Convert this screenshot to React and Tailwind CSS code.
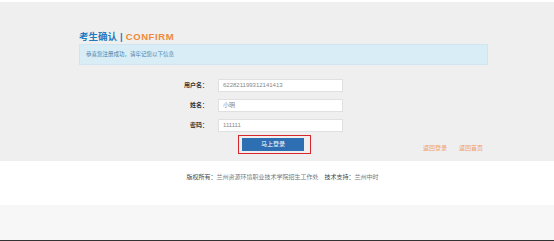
const FONT = { fontFamily: '"Liberation Sans", "Noto Sans CJK SC", sans-serif' };

const FIELDS = [
  { label: "用户名：", value: "622821199312141413" },
  { label: "姓名：", value: "小明" },
  { label: "密码：", value: "111111" },
];

export default function App() {
  return (
    <div className="w-[554px] h-[241px] flex flex-col bg-white overflow-hidden" style={FONT}>
      <div className="h-[2px] bg-white" />
      <div className="h-[159px] bg-[#efefef] pt-[28px]">
        <div className="ml-[79px] w-[409px]">
          <h1 className="h-[13px] flex items-center text-[9.5px] font-bold leading-none">
            <span className="text-[#1f7cc2]">考生确认</span>
            <span className="text-[#1f7cc2] mx-[3px]">|</span>
            <span className="text-[#ee8a3a] tracking-[0.6px]">CONFIRM</span>
          </h1>
          <div className="mt-[1px] h-[21px] bg-[#d9edf7] border border-[#cfe6f1] flex items-center pl-[6px]">
            <span className="text-[5.5px] text-[#4a7fa6]">恭喜您注册成功，请牢记您以下信息</span>
          </div>

          <div className="mt-[14px] flex flex-col gap-[7px]">
            {FIELDS.map((f) => (
              <div key={f.label} className="flex items-center">
                <span className="w-[129px] text-right text-[6px] font-bold text-[#333]">{f.label}</span>
                <div className="ml-[10px] w-[125px] h-[13px] bg-white border border-[#e0e0e0] flex items-center pl-[4px]">
                  <span className="text-[6px] text-[#888]">{f.value}</span>
                </div>
              </div>
            ))}
          </div>

          <div className="mt-[3px] flex items-end">
            <div className="ml-[159px] w-[73px] h-[19px] border border-[#d7262c] pl-[3px] pt-[2px]">
              <button className="w-[62px] h-[13px] bg-[#2e6fb3] text-white text-[6px] flex items-center justify-center">
                马上登录
              </button>
            </div>
            <div className="ml-[112px] mb-[1px] flex gap-[12px] text-[6px] text-[#f0a064]">
              <span>返回登录</span>
              <span>返回首页</span>
            </div>
          </div>
        </div>
      </div>
      <div className="h-[44px] bg-white flex justify-center pt-[13px] pl-[11px]">
        <p className="text-[6px] text-[#777] leading-none">
          <span className="text-[#444]">版权所有：</span>兰州资源环境职业技术学院招生工作处
          <span className="ml-[6px] text-[#444]">技术支持：</span>兰州中时
        </p>
      </div>
      <div className="flex-1 bg-[#f7f7f7]" />
      <div className="h-[1px] bg-[#333]" />
    </div>
  );
}
